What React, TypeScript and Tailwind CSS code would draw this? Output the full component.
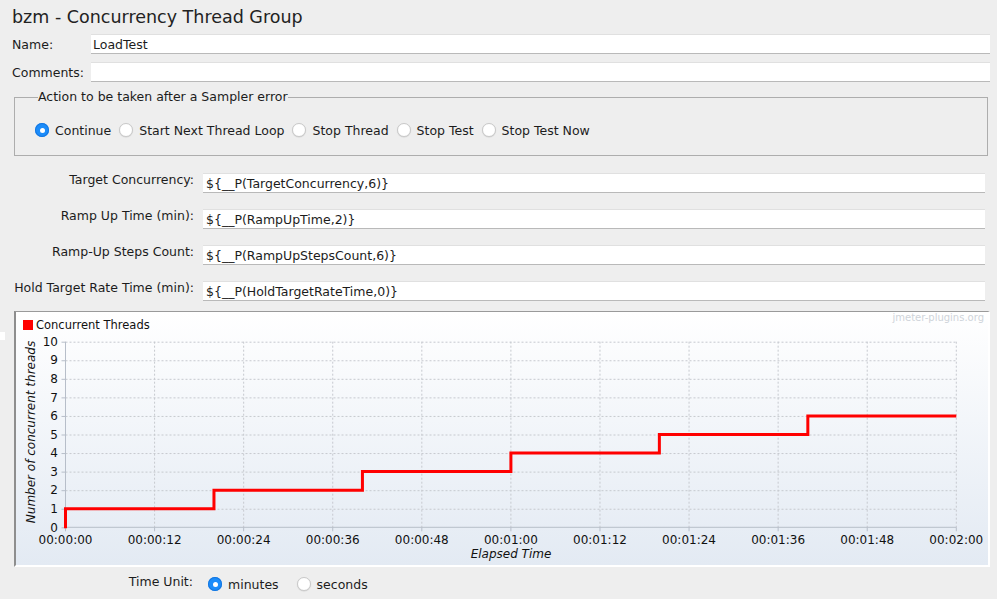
import React from "react";

function Radio({ checked }: { checked?: boolean }) {
  return checked ? (
    <span className="relative inline-flex h-[14px] w-[14px] shrink-0 items-center justify-center rounded-full bg-[#1b8cfa] shadow-[inset_0_0_0_1px_#1577e0]">
      <span className="h-[5px] w-[5px] rounded-full bg-white" />
    </span>
  ) : (
    <span className="inline-block h-[14px] w-[14px] shrink-0 rounded-full border border-[#c9c9c9] bg-white shadow-[0_0.5px_1px_rgba(0,0,0,0.12)]" />
  );
}

function Field({ label, value }: { label: string; value: string }) {
  return (
    <div className="flex h-[20px] items-center">
      <div className="mb-[6px] w-[194px] shrink-0 text-right leading-[16px]">{label}</div>
      <div className="ml-[9px] mr-[12px] flex h-[20px] flex-1 items-center border-t border-b border-t-[#e0e0e0] border-b-[#b9b9b9] bg-white pl-[3px] pt-[1px] leading-[16px]">
        {value}
      </div>
    </div>
  );
}

const Y0 = 527.3;
const DY = 18.56;
const X0 = 65.5;
const DX = 89.08;

function Chart() {
  const ys = Array.from({ length: 11 }, (_, i) => i);
  const xs = Array.from({ length: 11 }, (_, i) => i);
  const xLabels = [
    "00:00:00",
    "00:00:12",
    "00:00:24",
    "00:00:36",
    "00:00:48",
    "00:01:00",
    "00:01:12",
    "00:01:24",
    "00:01:36",
    "00:01:48",
    "00:02:00",
  ];
  const yv = (v: number) => Y0 - v * DY;
  const xt = (s: number) => X0 + (s / 12) * DX;
  let d = `M${xt(0)} ${Y0 + 1}`;
  for (let k = 1; k <= 6; k++) {
    d += ` V${yv(k)} H${xt(k * 20)}`;
  }
  return (
    <svg
      width={972}
      height={253}
      viewBox="16 312 972 253"
      className="block"
      style={{ fontFamily: "'DejaVu Sans', sans-serif" }}
    >
      {/* legend */}
      <rect x={23} y={320} width={10} height={10} fill="#ff0000" />
      <text x={36} y={329} fontSize={11.5} fill="#111">
        Concurrent Threads
      </text>
      <text x={984} y={321} fontSize={10} fill="#cfd4da" textAnchor="end">
        jmeter-plugins.org
      </text>

      {/* grid */}
      {ys.slice(1).map((v) => (
        <line
          key={"h" + v}
          x1={X0}
          x2={xt(120)}
          y1={yv(v) + 0.5}
          y2={yv(v) + 0.5}
          stroke="#c6c9cf"
          strokeWidth={1}
          strokeDasharray="2 2"
        />
      ))}
      {xs.slice(1).map((i) => (
        <line
          key={"v" + i}
          x1={X0 + i * DX}
          x2={X0 + i * DX}
          y1={yv(10)}
          y2={Y0}
          stroke="#c6c9cf"
          strokeWidth={1}
          strokeDasharray="2 2"
        />
      ))}
      {/* axes */}
      <line x1={X0} x2={X0} y1={yv(10)} y2={Y0} stroke="#b7bec9" strokeWidth={1} />
      <line x1={X0} x2={xt(120)} y1={Y0} y2={Y0} stroke="#b7bec9" strokeWidth={1} />
      {ys.map((v) => (
        <line key={"yt" + v} x1={61.5} x2={X0} y1={yv(v) + 0.5} y2={yv(v) + 0.5} stroke="#b7bec9" />
      ))}
      {xs.map((i) => (
        <line key={"xt" + i} x1={X0 + i * DX} x2={X0 + i * DX} y1={Y0} y2={Y0 + 4} stroke="#b7bec9" />
      ))}

      {/* y labels */}
      {ys.map((v) => (
        <text key={"yl" + v} x={58} y={yv(v) + 4.2} fontSize={12} fill="#111" textAnchor="end">
          {v}
        </text>
      ))}
      {/* x labels */}
      {xs.map((i) => (
        <text key={"xl" + i} x={X0 + i * DX} y={544} fontSize={12} fill="#111" textAnchor="middle">
          {xLabels[i]}
        </text>
      ))}
      <text x={511} y={557.5} fontSize={12} fontStyle="italic" fill="#111" textAnchor="middle">
        Elapsed Time
      </text>
      <text
        x={0}
        y={0}
        fontSize={12}
        fontStyle="italic"
        fill="#111"
        textAnchor="middle"
        transform="translate(35 432) rotate(-90)"
      >
        Number of concurrent threads
      </text>

      {/* series */}
      <path d={d} fill="none" stroke="#ff0000" strokeWidth={3} strokeLinejoin="miter" />
    </svg>
  );
}

export default function App() {
  return (
    <div className="relative h-[599px] w-[997px] overflow-hidden bg-[#eeeeee] font-['DejaVu_Sans',sans-serif] text-[12.5px] text-[#1c1c1c]">
      <div className="pl-[12px] pt-[6px] text-[17.5px] leading-[22px] text-[#222]">
        bzm - Concurrency Thread Group
      </div>

      <div className="mt-[6px] flex h-[20px] items-center pl-[12px]">
        <div className="w-[79px] shrink-0 pt-[1px] leading-[16px]">Name:</div>
        <div className="mr-[7px] flex h-[20px] flex-1 items-center border-t border-b border-t-[#e0e0e0] border-b-[#b9b9b9] bg-white pl-[2px] pt-[1px] leading-[16px]">
          LoadTest
        </div>
      </div>
      <div className="mt-[8px] flex h-[20px] items-center pl-[12px]">
        <div className="w-[79px] shrink-0 pt-[1px] leading-[16px]">Comments:</div>
        <div className="mr-[7px] h-[20px] flex-1 border-t border-b border-t-[#e0e0e0] border-b-[#b9b9b9] bg-white" />
      </div>

      <fieldset className="mt-[7px] ml-[14px] mr-[9px] border border-[#adadad] pb-[17px] pl-[20px] pt-[17px]">
        <legend className="ml-[3px] p-0 leading-[16px]">Action to be taken after a Sampler error</legend>
        <div className="flex h-[16px] items-center gap-[8px] leading-[16px]">
          {[
            ["Continue", true],
            ["Start Next Thread Loop", false],
            ["Stop Thread", false],
            ["Stop Test", false],
            ["Stop Test Now", false],
          ].map(([l, c]) => (
            <div key={l as string} className="flex items-center gap-[6px]">
              <Radio checked={c as boolean} />
              <span className="pt-[1px]">{l as string}</span>
            </div>
          ))}
        </div>
      </fieldset>

      <div className="mt-[17px] flex flex-col gap-[16px]">
        <Field label="Target Concurrency:" value="${__P(TargetConcurrency,6)}" />
        <Field label="Ramp Up Time (min):" value="${__P(RampUpTime,2)}" />
        <Field label="Ramp-Up Steps Count:" value="${__P(RampUpStepsCount,6)}" />
        <Field label="Hold Target Rate Time (min):" value="${__P(HoldTargetRateTime,0)}" />
      </div>

      <div className="mt-[10px] ml-[14px] h-[256px] w-[976px] border-t border-l-2 border-r-2 border-b-2 border-t-[#9a9a9a] border-l-[#8e8e8e] border-r-white border-b-white bg-linear-to-b from-[#ffffff] to-[#e3eaf3]">
        <Chart />
      </div>

      <div className="mt-[9px] flex h-[16px] items-center leading-[16px]">
        <div className="mb-[4px] w-[193px] text-right">Time Unit:</div>
        <div className="ml-[15px] flex items-center gap-[6px]">
          <Radio checked />
          <span className="pt-[1px]">minutes</span>
        </div>
        <div className="ml-[18px] flex items-center gap-[6px]">
          <Radio />
          <span className="pt-[1px]">seconds</span>
        </div>
      </div>

      <div className="absolute left-0 top-[332px] h-[8px] w-[5px] bg-white" />
    </div>
  );
}
